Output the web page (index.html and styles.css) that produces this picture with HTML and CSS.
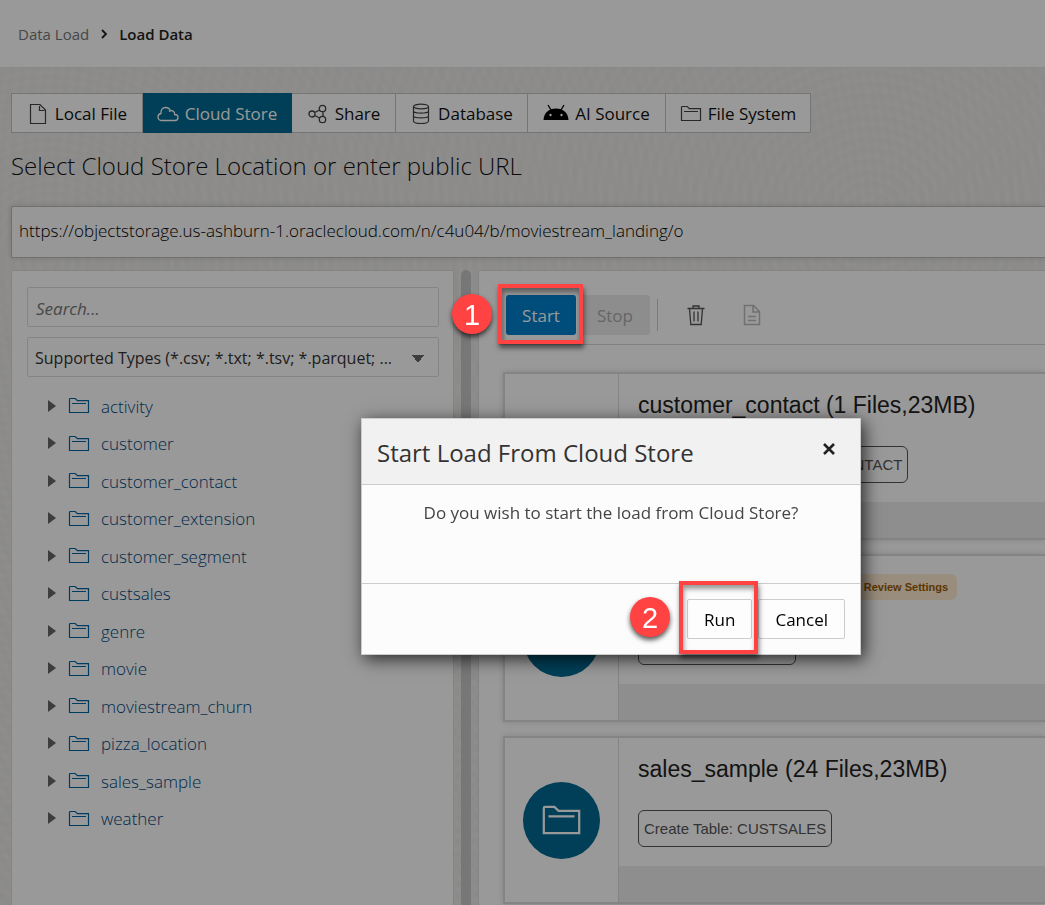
FILE: index.html
```html
<!DOCTYPE html>
<html lang="en">
<head>
<meta charset="utf-8">
<title>Load Data</title>
<link rel="stylesheet" href="styles.css">
</head>
<body>
<svg class="sprite" aria-hidden="true">
  <symbol id="folder" viewBox="0 0 22 17"><path d="M1.5 15.5V2.2Q1.5 1.5 2.2 1.5H7.2L9.4 3.6H20.5V15.500Z M4 6.500H18" fill="none" stroke="currentColor" stroke-width="1.200"/></symbol>
</svg>
<div class="app">
  <header class="header">
    <nav class="crumbs" aria-label="Breadcrumb">
      <a class="crumb" href="#">Data Load</a>
      <svg class="chevron" viewBox="0 0 8 12"><path d="M2 2l4 4-4 4" fill="none" stroke="currentColor" stroke-width="1.8"/></svg>
      <span class="crumb-current">Load Data</span>
    </nav>
  </header>
  <main class="main">
    <div class="tabs">
      <button class="tab tab-file"><svg class="icon" viewBox="0 0 22 22"><path d="M3.500 1.500H13L18.500 7V20.500H3.500Z M12.500 3V7.500H17.500" fill="none" stroke="currentColor" stroke-width="1.2"/></svg>Local File</button>
      <button class="tab tab-cloud"><svg class="icon" viewBox="0 0 22 22"><path d="M5 17.500C2.500 17.500 1 16 1 14C1 12 2.500 10.700 4 10.500C3.600 7 5.500 4.500 8.500 4.500C11 4.500 12.700 5.800 13.300 7.800C16 7 18 9 17.600 11.500C19.800 11.500 21 12.700 21 14.500C21 16.300 19.800 17.500 18 17.500Z M13.300 7.800Q12.500 8 12 8.500" fill="none" stroke="currentColor" stroke-width="1.300"/></svg>Cloud Store</button>
      <button class="tab tab-share"><svg class="icon" viewBox="0 0 22 22"><g fill="none" stroke="currentColor" stroke-width="1.300"><circle cx="5" cy="11" r="3"/><circle cx="15.500" cy="5.500" r="3.200"/><circle cx="15.500" cy="16.500" r="3.200"/><path d="M7.700 9.500L12.600 7M7.700 12.500L12.600 15M16 8.700V13.300"/></g></svg>Share</button>
      <button class="tab tab-db"><svg class="icon" viewBox="0 0 22 22"><g fill="none" stroke="currentColor" stroke-width="1.200"><ellipse cx="11" cy="3.500" rx="7.500" ry="2.300"/><path d="M3.500 3.500V18C3.500 19.500 7 20.500 11 20.500S18.500 19.500 18.500 18V3.500M3.500 8.200C4.500 10.700 17.500 10.700 18.500 8.200M3.500 13C4.500 15.500 17.500 15.500 18.500 13"/></g></svg>Database</button>
      <button class="tab tab-ai"><svg class="icon icon-ai" viewBox="0 0 26 22"><path d="M.5 17C1 9.500 6 5.500 13 5.500S25 9.500 25.500 17Z"/><path d="M5 2L8 7M21 2L18 7" stroke="currentColor" stroke-width="1.300"/><circle class="eye" cx="7.500" cy="12" r="1.200"/><circle class="eye" cx="18.500" cy="12" r="1.200"/></svg>AI Source</button>
      <button class="tab tab-fs"><svg class="icon icon-folder"><use href="#folder"/></svg>File System</button>
    </div>
    <label class="heading" for="url">Select Cloud Store Location or enter public URL</label>
    <input class="url" id="url" type="text" value="https://objectstorage.us-ashburn-1.oraclecloud.com/n/c4u04/b/moviestream_landing/o">
    <div class="panels">
      <section class="browser">
        <input class="search" type="search" placeholder="Search..." aria-label="Search">
        <select class="types" aria-label="File types"><option>Supported Types (*.csv; *.txt; *.tsv; *.parquet; ...</option></select>
        <ul class="tree">
          <li class="node"><svg class="icon-folder"><use href="#folder"/></svg><a href="#">activity</a></li>
          <li class="node"><svg class="icon-folder"><use href="#folder"/></svg><a href="#">customer</a></li>
          <li class="node"><svg class="icon-folder"><use href="#folder"/></svg><a href="#">customer_contact</a></li>
          <li class="node"><svg class="icon-folder"><use href="#folder"/></svg><a href="#">customer_extension</a></li>
          <li class="node"><svg class="icon-folder"><use href="#folder"/></svg><a href="#">customer_segment</a></li>
          <li class="node"><svg class="icon-folder"><use href="#folder"/></svg><a href="#">custsales</a></li>
          <li class="node"><svg class="icon-folder"><use href="#folder"/></svg><a href="#">genre</a></li>
          <li class="node"><svg class="icon-folder"><use href="#folder"/></svg><a href="#">movie</a></li>
          <li class="node"><svg class="icon-folder"><use href="#folder"/></svg><a href="#">moviestream_churn</a></li>
          <li class="node"><svg class="icon-folder"><use href="#folder"/></svg><a href="#">pizza_location</a></li>
          <li class="node"><svg class="icon-folder"><use href="#folder"/></svg><a href="#">sales_sample</a></li>
          <li class="node"><svg class="icon-folder"><use href="#folder"/></svg><a href="#">weather</a></li>
        </ul>
      </section>
      <div class="splitter"></div>
      <section class="cart">
        <div class="toolbar">
          <button class="btn btn-start">Start</button>
          <button class="btn btn-stop" disabled>Stop</button>
          <span class="divider"></span>
          <button class="tool" aria-label="Delete"><svg class="icon" viewBox="0 0 22 22"><path d="M2.500 4.500H19.500M8 4.500V2H14V4.500M4.500 4.500L5.800 20.500H16.200L17.500 4.500M9 7.500V17.500M13 7.500V17.500" fill="none" stroke="currentColor" stroke-width="1.300"/></svg></button>
          <button class="tool" aria-label="Report" disabled><svg class="icon" viewBox="0 0 22 22"><path d="M3.500 1.500H12.500L18.500 7.500V20.500H3.500Z M12 2V8H18 M7 12.500H15M7 16.500H15" fill="none" stroke="currentColor" stroke-width="1.500"/></svg></button>
        </div>
        <div class="cards">
          <article class="card">
            <div class="card-side"><span class="disc"><svg class="disc-icon"><use href="#folder"/></svg></span></div>
            <div class="card-body"><h2 class="card-title">customer_contact (1 Files,23MB)</h2><span class="pill">Create Table: CUSTOMER_CONTACT</span></div>
          </article>
          <article class="card">
            <div class="card-side"><span class="disc"><svg class="disc-icon"><use href="#folder"/></svg></span></div>
            <div class="card-body"><h2 class="card-title">genre (1 Files,23MB)<span class="review">Review Settings</span></h2><span class="pill">Create Table: GENRE</span></div>
          </article>
          <article class="card">
            <div class="card-side"><span class="disc"><svg class="disc-icon"><use href="#folder"/></svg></span></div>
            <div class="card-body"><h2 class="card-title">sales_sample (24 Files,23MB)</h2><span class="pill">Create Table: CUSTSALES</span></div>
          </article>
        </div>
      </section>
    </div>
  </main>
</div>
<div class="backdrop"></div>
<dialog class="dialog" open aria-labelledby="dialog-title">
  <div class="dialog-head">
    <h1 class="dialog-title" id="dialog-title">Start Load From Cloud Store</h1>
    <button class="close" aria-label="Close"><svg class="close-icon" viewBox="0 0 14 14"><path d="M2 2L12 12M12 2L2 12" stroke="currentColor" stroke-width="2.600"/></svg></button>
  </div>
  <p class="dialog-text">Do you wish to start the load from Cloud Store?</p>
  <div class="dialog-foot">
    <button class="dialog-btn">Run</button>
    <button class="dialog-btn">Cancel</button>
  </div>
</dialog>
<div class="marker marker-start"></div>
<div class="marker marker-run"></div>
<span class="step step-1">1</span>
<span class="step step-2">2</span>
</body>
</html>
```

FILE: styles.css
```css
* { box-sizing: border-box; }
body {
  margin: 0;
  font: 17px/24px "Open Sans", "Noto Sans", sans-serif;
  color: #333;
  background: #eeedea;
}
button, input, select { font: inherit; color: inherit; margin: 0; }
.sprite { position: absolute; width: 0; height: 0; }
.app { display: flex; flex-direction: column; height: 100vh; overflow: hidden; }

.header {
  flex: none;
  display: flex;
  align-items: center;
  height: 68px;
  padding: 0 18px;
  background: #fff;
  border-bottom: 1px solid #e4e4e4;
}
.crumbs { display: flex; align-items: center; gap: 11px; font-size: 15px; }
.crumb { color: #777; text-decoration: none; }
.chevron { width: 8px; height: 12px; color: #222; }
.crumb-current { color: #222; font-weight: 600; }

.main {
  flex: 1;
  min-height: 0;
  display: flex;
  flex-direction: column;
  padding: 25px 0 0 11px;
  background:
    repeating-radial-gradient(circle at 50px 190px, #a8a0b00a 0, #a8a0b00a 3px, #a8a0b000 5px, #a8a0b00a 9px),
    repeating-radial-gradient(circle at 870px 150px, #a8a0b00c 0, #a8a0b00c 3px, #a8a0b000 6px, #a8a0b00c 11px),
    #eeedea;
}

.tabs { display: flex; flex: none; height: 40px; }
.tab {
  display: flex;
  align-items: center;
  justify-content: center;
  gap: 6px;
  padding: 1px 0 0;
  width: 132px;
  border: 1px solid #c4c4c4;
  border-left-width: 0;
  background: #fff;
  color: #111;
  white-space: nowrap;
}
.tab-file { border-left-width: 1px; }
.tab-cloud { width: 149px; background: #006991; border-color: #006991; color: #fff; }
.tab-share { width: 104px; }
.tab-ai { width: 138px; }
.tab-fs { width: 145px; }
.icon { width: 22px; height: 22px; flex: none; }
.tab .icon { color: #444; }
.tab-cloud .icon { color: #fff; }
.tab .icon-ai { width: 26px; color: #000; }
.eye { fill: #fff; }
.icon-folder, .tab .icon-folder { width: 22px; height: 17px; flex: none; }

.heading {
  flex: none;
  margin-top: 16px;
  font-size: 24px;
  line-height: 34px;
  font-weight: 300;
  color: #111;
}
.url {
  flex: none;
  width: 100%;
  height: 52px;
  margin-top: 23px;
  padding: 0 7px 3px;
  border: 1px solid #bbb;
  border-right: 0;
  border-radius: 2px 0 0 2px;
  background: #fcfcfc;
  box-shadow: 0 0 6px #0002;
  font-weight: 300;
  color: #000;
}

.panels {
  flex: 1;
  min-height: 0;
  display: grid;
  grid-template-columns: 443px 10px 1fr;
  column-gap: 7px;
  margin-top: 12px;
}
.browser, .cart { background: #fff; border: 1px solid #dcdcdc; border-bottom: 0; overflow: hidden; }
.cart { border-right: 0; }
.splitter { background: #c6c6c6; border-radius: 5px 5px 0 0; }
.browser { display: flex; flex-direction: column; gap: 10px; padding: 16px 14px 0 15px; }
.search, .types {
  flex: none;
  appearance: none;
  width: 100%;
  height: 40px;
  padding: 2px 7px 0;
  border: 1px solid #dcdcdc;
  border-radius: 2px;
  background-color: #fff;
}
.search { padding-left: 8px; }
.search::placeholder { color: #777; font-style: italic; opacity: 1; }
.types {
  padding-right: 36px;
  font-size: 16px;
  background-image: linear-gradient(to bottom left, #666 50%, #fff0 51%), linear-gradient(to bottom right, #666 50%, #fff0 51%);
  background-size: 6px 8px;
  background-position: right 20px top 17px, right 14px top 17px;
  background-repeat: no-repeat;
}
.tree {
  flex: none;
  display: grid;
  grid-auto-rows: 1fr;
  height: 450px;
  margin: 0;
  padding: 0 0 0 21px;
  list-style: none;
}
.node { display: flex; align-items: center; }
.node::before {
  content: "";
  border: 6px solid #fff0;
  border-left: 8px solid #666;
  border-right: 0;
  margin-right: 12px;
}
.node a { padding-top: 2px; margin-left: 11px; font-weight: 300; color: #004680; text-decoration: none; }
.node .icon-folder { color: #0064a3; }

.toolbar {
  display: flex;
  align-items: center;
  height: 74px;
  margin-left: 20px;
  padding: 14px 0 0 7px;
  border-bottom: 1px solid #d8d8d8;
}
.btn { height: 40px; padding: 2px 0 0; border: 0; border-radius: 3px; }
.btn-start { width: 70px; background: #007fcc; color: #fff; }
.btn-stop { width: 70px; margin-left: 4px; background: #ebebeb; color: #aaa; }
.divider { width: 1px; height: 32px; margin: 0 27px 0 7px; background: #ccc; }
.tool { display: flex; padding: 0; margin-right: 34px; border: 0; background: none; color: #555; }
.tool:disabled { color: #bbb; }

.cards { display: grid; gap: 14px; padding: 27px 0 0 24px; }
.card {
  display: grid;
  grid-template-columns: 114px 1fr;
  height: 168px;
  border: 2px solid #dcdcdc;
  border-right: 0;
  background: #fff;
  box-shadow: 0 0 6px #0002;
}
.card-side { display: grid; place-items: center; border-right: 1px solid #dcdcdc; }
.disc { display: grid; place-items: center; width: 77px; height: 77px; border-radius: 50%; background: #006991; color: #fff; }
.disc-icon { width: 41px; height: 32px; }
.card-body { padding: 13px 19px 0; border-bottom: 36px solid #ededed; font-family: "Liberation Sans", Arial, sans-serif; }
.card-title {
  display: flex;
  align-items: center;
  gap: 2px;
  margin: 0 0 23px;
  font-size: 23px;
  line-height: 36px;
  font-weight: 400;
  color: #222;
}
.review {
  padding: 0 9px;
  border-radius: 6px;
  background: #ffebd0;
  color: #9a5a00;
  font-size: 11px;
  font-weight: 700;
  line-height: 26px;
}
.pill {
  display: inline-block;
  height: 37px;
  padding: 0 5px;
  border: 1px solid #555;
  border-radius: 6px;
  font-size: 15px;
  line-height: 35px;
  color: #555;
}

.backdrop { position: fixed; inset: 0; background: #0006; }
.dialog {
  position: absolute;
  left: 361px;
  top: 418px;
  width: 500px;
  margin: 0;
  padding: 0;
  border: 1px solid #ccc;
  background: #fcfcfc;
  color: #444;
  box-shadow: 3px 4px 16px #000b;
}
.dialog-head {
  display: flex;
  justify-content: space-between;
  height: 66px;
  padding: 16px 24px 0 15px;
  background: #f1f1f1;
  border-bottom: 1px solid #ccc;
}
.dialog-title { margin: 0; font-size: 24px; line-height: 36px; font-weight: 400; color: #333; }
.close { display: flex; align-self: flex-start; margin-top: 7px; padding: 0; border: 0; background: none; color: #222; }
.close-icon { width: 14px; height: 14px; }
.dialog-text { height: 98px; margin: 0; padding-top: 16px; text-align: center; }
.dialog-foot {
  display: flex;
  justify-content: flex-end;
  gap: 6px;
  padding: 15px;
  border-top: 1px solid #ccc;
}
.dialog-btn {
  height: 40px;
  padding: 2px 16px 0;
  border: 1px solid #ccc;
  border-radius: 2px;
  background: #fdfdfd;
  color: #000;
}

.marker {
  position: absolute;
  border: 4px solid #ff4343;
  box-shadow: 1px 4px 5px #0008, inset 1px 4px 5px #0006;
}
.marker-start { left: 498px; top: 284px; width: 85px; height: 60px; }
.marker-run { left: 679px; top: 581px; width: 79px; height: 73px; }
.step {
  position: absolute;
  width: 40px;
  height: 40px;
  border-radius: 50%;
  background: #ff4343;
  color: #fff;
  box-shadow: 0 3px 5px #000a;
  font: 29px/42px "Liberation Sans", Arial, sans-serif;
  text-align: center;
}
.step-1 { left: 452px; top: 294px; }
.step-2 { left: 630px; top: 597px; }
```
